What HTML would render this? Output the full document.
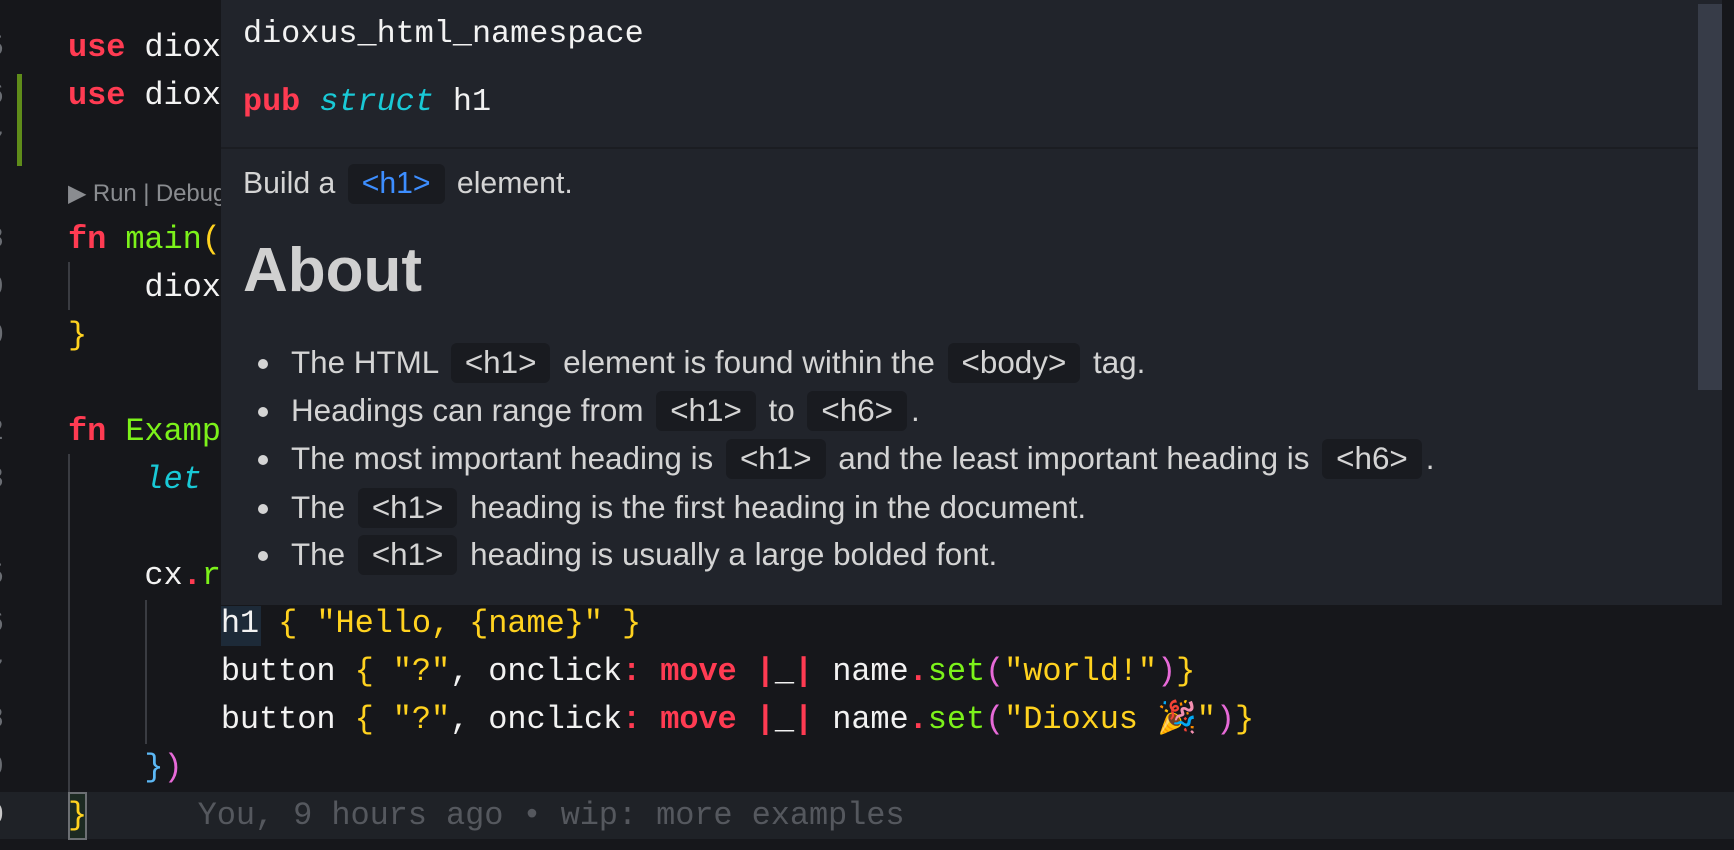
<!DOCTYPE html>
<html><head><meta charset="utf-8"><style>
html,body{margin:0;padding:0;width:1734px;height:850px;overflow:hidden;background:#16171b}
.ed{position:absolute;left:0;top:0;width:1734px;height:850px;font-family:"Liberation Mono",monospace;font-size:32px;color:#f2f2f2}
.ln{position:absolute;left:68px;height:48px;line-height:48px;white-space:pre;letter-spacing:-0.1px}
.num{position:absolute;left:-14px;height:48px;line-height:48px;color:#6a6d73;font-size:30px;font-family:"Liberation Mono",monospace}
.k{color:#ff3b52;font-weight:bold}.g{color:#7cf21a}.y{color:#ffd21f}.c{color:#19c9d6;font-style:italic}.m{color:#e76ad8}.b{color:#5cb8f5}
.pop{position:absolute;left:221px;top:0;width:1501px;height:605px;background:#21242b;font-family:"Liberation Sans",sans-serif;color:#d4d4d4;z-index:5}
.sb{position:absolute;left:1477px;top:4px;width:24px;height:386px;background:#373c48}
.chip{display:inline-block;background:#191b20;border-radius:6px;padding:0 14px;height:40px;line-height:40px;margin:0 4px}
.li{position:absolute;left:42px;font-size:31.4px;height:48px;line-height:48px;white-space:nowrap}
.li:before{content:"";position:absolute;left:-33px;top:20px;width:10px;height:10px;border-radius:50%;background:#d4d4d4}
</style></head><body>
<div class="ed">
<div style="position:absolute;left:17px;top:74px;width:5px;height:92px;background:#5f8c1a"></div>
<div style="position:absolute;left:68px;top:262px;width:2px;height:48px;background:#3a3c42"></div>
<div style="position:absolute;left:68px;top:454px;width:2px;height:384px;background:#3a3c42"></div>
<div style="position:absolute;left:145px;top:600px;width:2px;height:144px;background:#3a3c42"></div>
<div style="position:absolute;left:0;top:792px;width:1734px;height:47px;background:#1f2227"></div>
<div style="position:absolute;left:68px;top:792px;width:15px;height:44px;border:2px solid #6c6f73;background:#1c2a22"></div>
<div style="position:absolute;left:221px;top:606px;width:40px;height:40px;background:#1d2a38"></div>
<div class="num" style="top:24px">5</div><div class="num" style="top:72px">6</div><div class="num" style="top:120px">7</div>
<div class="num" style="top:216px">8</div><div class="num" style="top:264px">9</div><div class="num" style="top:312px">0</div>
<div class="num" style="top:408px">2</div><div class="num" style="top:456px">3</div><div class="num" style="top:552px">5</div>
<div class="num" style="top:600px">6</div><div class="num" style="top:648px">7</div><div class="num" style="top:696px">8</div><div class="num" style="top:744px">9</div><div class="num" style="top:792px;color:#c8c8c8">0</div>
<div class="ln" style="top:24px"><span class="k">use</span> dioxus::prelude::*;</div>
<div class="ln" style="top:72px"><span class="k">use</span> dioxus::events::*;</div>
<div class="ln" style="top:170px;font-family:'Liberation Sans',sans-serif;font-size:24px;color:#8a8c90">▶ Run | Debug</div>
<div class="ln" style="top:216px"><span class="k">fn</span> <span class="g">main</span><span class="y">()</span></div>
<div class="ln" style="top:264px">    dioxus::desktop::launch(App);</div>
<div class="ln" style="top:312px"><span class="y">}</span></div>
<div class="ln" style="top:408px"><span class="k">fn</span> <span class="g">Example</span></div>
<div class="ln" style="top:456px">    <span class="c">let</span> name</div>
<div class="ln" style="top:552px">    cx<span class="k">.</span><span class="g">render</span></div>
<div class="ln" style="top:600px">        h1 <span class="y">{</span> <span class="y">"Hello, {name}"</span> <span class="y">}</span></div>
<div class="ln" style="top:648px">        button <span class="y">{</span> <span class="y">"?"</span>, onclick<span class="k">:</span> <span class="k">move</span> <span class="k">|</span>_<span class="k">|</span> name<span class="k">.</span><span class="g">set</span><span class="m">(</span><span class="y">"world!"</span><span class="m">)</span><span class="y">}</span></div>
<div class="ln" style="top:696px">        button <span class="y">{</span> <span class="y">"?"</span>, onclick<span class="k">:</span> <span class="k">move</span> <span class="k">|</span>_<span class="k">|</span> name<span class="k">.</span><span class="g">set</span><span class="m">(</span><span class="y">"Dioxus 🎉"</span><span class="m">)</span><span class="y">}</span></div>
<div class="ln" style="top:744px">    <span class="b">}</span><span class="m">)</span></div>
<div class="ln" style="top:792px"><span class="y">}</span>     <span style="color:#55585e;margin-left:15px">You, 9 hours ago • wip: more examples</span></div>
</div>
<div class="pop">
<div style="position:absolute;left:22px;top:16px;font-family:'Liberation Mono',monospace;font-size:31.8px;color:#f2f2f2;white-space:pre">dioxus_html_namespace</div>
<div style="position:absolute;left:22px;top:84px;font-family:'Liberation Mono',monospace;font-size:31.8px;color:#f2f2f2;white-space:pre"><span class="k">pub</span> <span class="c" style="font-style:italic">struct</span> h1</div>
<div style="position:absolute;left:0;top:147px;width:1477px;height:2px;background:#1b1d22"></div>
<div style="position:absolute;left:22px;top:164px;font-size:30.2px;line-height:40px;white-space:nowrap">Build a <span class="chip" style="color:#3d8eff">&lt;h1&gt;</span> element.</div>
<div style="position:absolute;left:22px;top:232px;font-size:62px;font-weight:bold;color:#d0d0d0;line-height:78px">About</div>
<div class="li" style="top:339px;left:70px">The HTML <span class="chip">&lt;h1&gt;</span> element is found within the <span class="chip">&lt;body&gt;</span> tag.</div>
<div class="li" style="top:387px;left:70px">Headings can range from <span class="chip">&lt;h1&gt;</span> to <span class="chip">&lt;h6&gt;</span>.</div>
<div class="li" style="top:435px;left:70px">The most important heading is <span class="chip">&lt;h1&gt;</span> and the least important heading is <span class="chip">&lt;h6&gt;</span>.</div>
<div class="li" style="top:484px;left:70px">The <span class="chip">&lt;h1&gt;</span> heading is the first heading in the document.</div>
<div class="li" style="top:531px;left:70px">The <span class="chip">&lt;h1&gt;</span> heading is usually a large bolded font.</div>
<div class="sb"></div>
</div>
</body></html>
